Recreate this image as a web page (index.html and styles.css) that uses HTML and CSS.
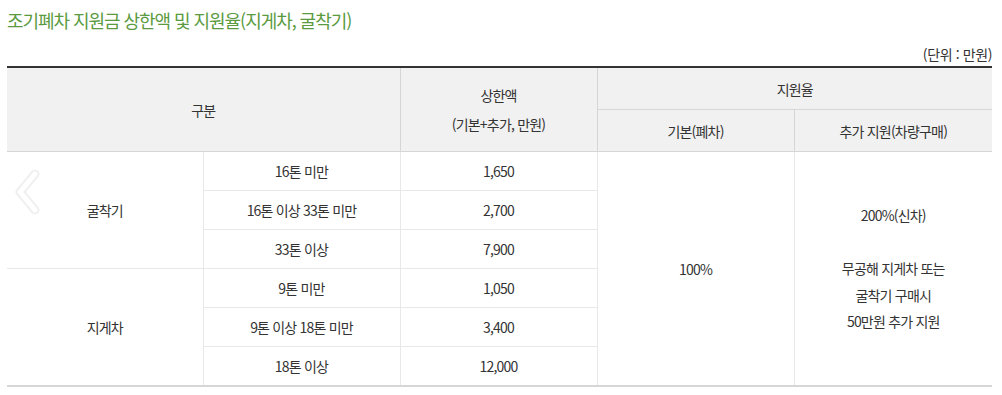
FILE: index.html
```html
<!DOCTYPE html>
<html lang="ko">
<head>
<meta charset="utf-8">
<link rel="stylesheet" href="styles.css">
</head>
<body>
<div class="wrap">
  <h3 class="title">조기폐차 지원금 상한액 및 지원율(지게차, 굴착기)</h3>
  <p class="unit">(단위 : 만원)</p>
  <table class="tbl">
    <colgroup>
      <col class="c1"><col class="c2"><col class="c3"><col class="c4"><col class="c5">
    </colgroup>
    <thead>
      <tr class="h1">
        <th colspan="2" rowspan="2">구분</th>
        <th rowspan="2" class="two">상한액<br>(기본+추가, 만원)</th>
        <th colspan="2">지원율</th>
      </tr>
      <tr class="h2">
        <th>기본(폐차)</th>
        <th>추가 지원(차량구매)</th>
      </tr>
    </thead>
    <tbody>
      <tr>
        <td rowspan="3" class="grp">굴착기</td>
        <td>16톤 미만</td>
        <td>1,650</td>
        <td rowspan="6" class="tall">100%</td>
        <td rowspan="6" class="tall multi">200%(신차)<br><br>무공해 지게차 또는<br>굴착기 구매시<br>50만원 추가 지원</td>
      </tr>
      <tr><td>16톤 이상 33톤 미만</td><td>2,700</td></tr>
      <tr class="grpend"><td>33톤 이상</td><td>7,900</td></tr>
      <tr>
        <td rowspan="3" class="grp">지게차</td>
        <td>9톤 미만</td>
        <td>1,050</td>
      </tr>
      <tr><td>9톤 이상 18톤 미만</td><td>3,400</td></tr>
      <tr class="last"><td>18톤 이상</td><td>12,000</td></tr>
    </tbody>
  </table>
  <svg class="arrow" width="30" height="46" viewBox="0 0 30 46" aria-hidden="true">
    <path d="M22 5 L7 23 L22 41" fill="none" stroke="#000" stroke-opacity="0.06" stroke-width="9" stroke-linecap="round" stroke-linejoin="round"/>
    <path d="M22 5 L7 23 L22 41" fill="none" stroke="#ffffff" stroke-width="5" stroke-linecap="round" stroke-linejoin="round"/>
  </svg>
</div>
</body>
</html>
```

FILE: styles.css
```css
html, body {
  margin: 0;
  padding: 0;
  background: #fff;
}
body {
  font-family: "Noto Sans CJK KR", "Noto Sans", sans-serif;
  color: #333;
}
.wrap {
  position: relative;
  margin-left: 7px;
  width: 985px;
}
.title {
  margin: 0;
  padding-top: 6px;
  height: 29px;
  font-size: 18px;
  line-height: 28px;
  font-weight: 400;
  letter-spacing: -1.05px;
  color: #5b9b3f;
}
.unit {
  margin: 0;
  height: 31px;
  font-size: 14px;
  line-height: 38px;
  letter-spacing: -0.4px;
  text-align: right;
  color: #333;
}
.tbl {
  width: 985px;
  border-collapse: collapse;
  table-layout: fixed;
  border-top: 2px solid #333;
  font-size: 14px;
  letter-spacing: -0.8px;
}
.c1 { width: 196px; }
.c2 { width: 197px; }
.c3 { width: 197px; }
.c4 { width: 197px; }
.c5 { width: 198px; }
.tbl th {
  background: #f1f1f1;
  font-weight: 400;
  color: #333;
  border: 1px solid #d6d6d6;
  border-top: 0;
  padding: 0;
  text-align: center;
  vertical-align: middle;
}
.tbl th:first-child { border-left: 0; }
.tbl tr.h1 th:last-child,
.tbl tr.h2 th:last-child { border-right: 0; }
.tbl tr.h1 th { height: 41px; }
.tbl tr.h2 th { height: 41px; }
.tbl th.two { line-height: 29px; }
.tbl td {
  border: 1px solid #e8e8e8;
  height: 38px;
  padding: 0;
  text-align: center;
  vertical-align: middle;
  color: #333;
}
.tbl td.grp { border-left: 0; border-bottom-color: #e8e8e8; }
.tbl td.multi { border-right: 0; line-height: 26.4px; }
.tbl tr.last td,
.tbl td.tall { border-bottom: 2px solid #d6d6d6; }
.tbl tbody tr:last-child td { border-bottom: 2px solid #d6d6d6; }
.tbl tbody tr:nth-child(4) td.grp { border-bottom: 2px solid #d6d6d6; }
.arrow {
  position: absolute;
  left: 6px;
  top: 169px;
}
```
